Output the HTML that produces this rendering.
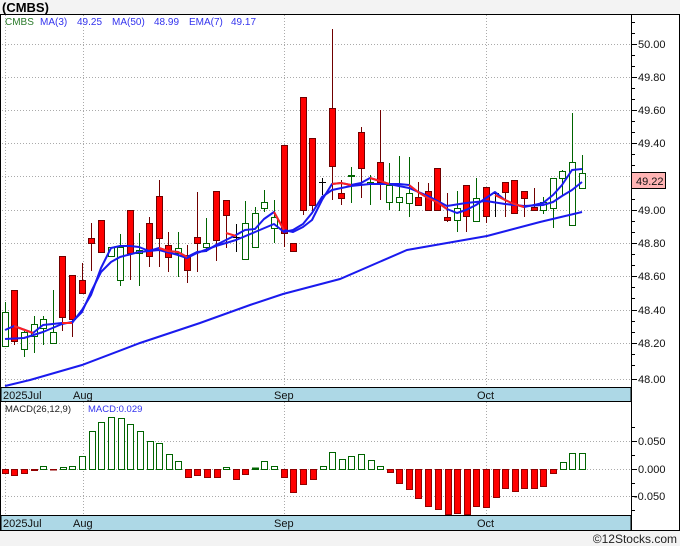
<!DOCTYPE html>
<html><head><meta charset="utf-8"><style>
html,body{margin:0;padding:0;background:#f3f3f3;}
svg{display:block;font-family:"Liberation Sans",sans-serif;}
</style></head><body>
<svg width="680" height="546" viewBox="0 0 680 546" xmlns="http://www.w3.org/2000/svg">
<rect x="0" y="0" width="680" height="546" fill="#f3f3f3"/>
<text x="2" y="12" font-size="13" font-weight="bold" fill="#000">(CMBS)</text>
<rect x="0.5" y="14.5" width="679" height="516" fill="#fff" stroke="#000"/>
<!-- grid price -->
<g stroke="#aaa" stroke-dasharray="1,2" stroke-width="1">
<line x1="2" x2="631" y1="44.5" y2="44.5"/><line x1="2" x2="631" y1="77.5" y2="77.5"/><line x1="2" x2="631" y1="110.5" y2="110.5"/><line x1="2" x2="631" y1="143.5" y2="143.5"/><line x1="2" x2="631" y1="176.5" y2="176.5"/><line x1="2" x2="631" y1="210.5" y2="210.5"/><line x1="2" x2="631" y1="243.5" y2="243.5"/><line x1="2" x2="631" y1="276.5" y2="276.5"/><line x1="2" x2="631" y1="310.5" y2="310.5"/><line x1="2" x2="631" y1="343.5" y2="343.5"/><line x1="2" x2="631" y1="379.5" y2="379.5"/>
<line x1="5.5" x2="5.5" y1="15" y2="387"/><line x1="83.5" x2="83.5" y1="15" y2="387"/><line x1="284.5" x2="284.5" y1="15" y2="387"/><line x1="486.5" x2="486.5" y1="15" y2="387"/>
<line x1="2" x2="631" y1="441.5" y2="441.5"/><line x1="2" x2="631" y1="469.5" y2="469.5"/><line x1="2" x2="631" y1="496.5" y2="496.5"/>
<line x1="5.5" x2="5.5" y1="402" y2="515"/><line x1="83.5" x2="83.5" y1="402" y2="515"/><line x1="284.5" x2="284.5" y1="402" y2="515"/><line x1="486.5" x2="486.5" y1="402" y2="515"/>
</g>
<!-- legend -->
<g font-size="10">
<text x="5" y="25" fill="#2a7a2a">CMBS</text>
<text x="40" y="25" fill="#3333ee">MA(3)</text><text x="77" y="25" fill="#3333ee">49.25</text>
<text x="112" y="25" fill="#3333ee">MA(50)</text><text x="154" y="25" fill="#3333ee">48.99</text>
<text x="189" y="25" fill="#3333ee">EMA(7)</text><text x="231" y="25" fill="#3333ee">49.17</text>
</g>
<!-- candles -->
<g stroke-width="1">
<g stroke="#006400" fill="#fff">
<line x1="5.5" x2="5.5" y1="302" y2="346"/><rect x="2.5" y="312.5" width="6" height="34"/>
<line x1="24.5" x2="24.5" y1="330" y2="357"/><rect x="21.5" y="332.5" width="6" height="17"/>
<line x1="34.5" x2="34.5" y1="316" y2="353"/><rect x="31.5" y="324.5" width="6" height="12"/>
<line x1="43.5" x2="43.5" y1="316" y2="345"/><rect x="40.5" y="319.5" width="6" height="9"/>
<line x1="53.5" x2="53.5" y1="290" y2="343"/><rect x="50.5" y="332.5" width="6" height="11"/>
<rect x="108.5" y="247.5" width="6" height="9"/>
<line x1="120.5" x2="120.5" y1="234" y2="286"/><rect x="117.5" y="247.5" width="6" height="33"/>
<line x1="139.5" x2="139.5" y1="233" y2="286"/><rect x="136.5" y="250.5" width="6" height="3"/>
<line x1="178.5" x2="178.5" y1="232" y2="277"/><rect x="175.5" y="248.5" width="6" height="5"/>
<line x1="206.5" x2="206.5" y1="218" y2="252"/><rect x="203.5" y="243.5" width="6" height="4"/>
<line x1="245.5" x2="245.5" y1="201" y2="259"/><rect x="242.5" y="223.5" width="6" height="36"/>
<line x1="255.5" x2="255.5" y1="207" y2="247"/><rect x="252.5" y="213.5" width="6" height="34"/>
<line x1="264.5" x2="264.5" y1="190" y2="212"/><rect x="261.5" y="202.5" width="6" height="6"/>
<line x1="274.5" x2="274.5" y1="200" y2="243"/><rect x="271.5" y="217.5" width="6" height="11"/>
<line x1="351.5" x2="351.5" y1="167" y2="203"/><rect x="348.5" y="175.5" width="6" height="1"/>
<line x1="370.5" x2="370.5" y1="175" y2="205"/><rect x="367.5" y="182.5" width="6" height="2"/>
<line x1="389.5" x2="389.5" y1="163" y2="210"/><rect x="386.5" y="185.5" width="6" height="17"/>
<line x1="399.5" x2="399.5" y1="156" y2="211"/><rect x="396.5" y="197.5" width="6" height="5"/>
<line x1="409.5" x2="409.5" y1="157" y2="217"/><rect x="406.5" y="193.5" width="6" height="10"/>
<line x1="457.5" x2="457.5" y1="191" y2="232"/><rect x="454.5" y="208.5" width="6" height="12"/>
<line x1="476.5" x2="476.5" y1="178" y2="221"/><rect x="473.5" y="198.5" width="6" height="23"/>
<line x1="543.5" x2="543.5" y1="197" y2="214"/><rect x="540.5" y="202.5" width="6" height="8"/>
<line x1="553.5" x2="553.5" y1="178" y2="228"/><rect x="550.5" y="178.5" width="6" height="30"/>
<line x1="562.5" x2="562.5" y1="170" y2="195"/><rect x="559.5" y="171.5" width="6" height="7"/>
<line x1="572.5" x2="572.5" y1="113" y2="225"/><rect x="569.5" y="162.5" width="6" height="63"/>
<line x1="582.5" x2="582.5" y1="155" y2="188"/><rect x="579.5" y="173.5" width="6" height="15"/>
</g>
<g stroke="#700000" fill="#ff0000">
<line x1="14.5" x2="14.5" y1="290" y2="345"/><rect x="11.5" y="290.5" width="6" height="51"/>
<line x1="62.5" x2="62.5" y1="256" y2="331"/><rect x="59.5" y="256.5" width="6" height="61"/>
<line x1="72.5" x2="72.5" y1="275" y2="337"/><rect x="69.5" y="275.5" width="6" height="44"/>
<line x1="82.5" x2="82.5" y1="263" y2="293"/><rect x="79.5" y="280.5" width="6" height="13"/>
<line x1="91.5" x2="91.5" y1="223" y2="271"/><rect x="88.5" y="238.5" width="6" height="5"/>
<rect x="98.5" y="220.5" width="6" height="32"/>
<line x1="130.5" x2="130.5" y1="210" y2="280"/><rect x="127.5" y="210.5" width="6" height="43"/>
<line x1="149.5" x2="149.5" y1="217" y2="267"/><rect x="146.5" y="223.5" width="6" height="33"/>
<line x1="159.5" x2="159.5" y1="180" y2="267"/><rect x="156.5" y="196.5" width="6" height="42"/>
<line x1="168.5" x2="168.5" y1="232" y2="272"/><rect x="165.5" y="245.5" width="6" height="12"/>
<line x1="187.5" x2="187.5" y1="245" y2="283"/><rect x="184.5" y="255.5" width="6" height="15"/>
<line x1="197.5" x2="197.5" y1="192" y2="272"/><rect x="194.5" y="237.5" width="6" height="6"/>
<line x1="216.5" x2="216.5" y1="191" y2="261"/><rect x="213.5" y="191.5" width="6" height="49"/>
<line x1="226.5" x2="226.5" y1="200" y2="248"/><rect x="223.5" y="200.5" width="6" height="15"/>
<line x1="284.5" x2="284.5" y1="145" y2="247"/><rect x="281.5" y="145.5" width="6" height="88"/>
<rect x="290.5" y="243.5" width="6" height="8"/>
<line x1="303.5" x2="303.5" y1="97" y2="215"/><rect x="300.5" y="97.5" width="6" height="113"/>
<line x1="312.5" x2="312.5" y1="138" y2="213"/><rect x="309.5" y="138.5" width="6" height="67"/>
<line x1="332.5" x2="332.5" y1="29" y2="200"/><rect x="329.5" y="108.5" width="6" height="58"/>
<line x1="341.5" x2="341.5" y1="180" y2="205"/><rect x="338.5" y="193.5" width="6" height="5"/>
<line x1="361.5" x2="361.5" y1="127" y2="198"/><rect x="358.5" y="132.5" width="6" height="36"/>
<line x1="380.5" x2="380.5" y1="110" y2="200"/><rect x="377.5" y="162.5" width="6" height="20"/>
<line x1="418.5" x2="418.5" y1="182" y2="205"/><rect x="415.5" y="197.5" width="6" height="8"/>
<line x1="428.5" x2="428.5" y1="183" y2="210"/><rect x="425.5" y="191.5" width="6" height="19"/>
<rect x="434.5" y="168.5" width="6" height="42"/>
<line x1="447.5" x2="447.5" y1="193" y2="222"/><rect x="444.5" y="217.5" width="6" height="3"/>
<line x1="466.5" x2="466.5" y1="185" y2="232"/><rect x="463.5" y="185.5" width="6" height="31"/>
<line x1="486.5" x2="486.5" y1="187" y2="223"/><rect x="483.5" y="187.5" width="6" height="29"/>
<line x1="505.5" x2="505.5" y1="182" y2="217"/><rect x="502.5" y="182.5" width="6" height="10"/>
<rect x="511.5" y="180.5" width="6" height="33"/>
<line x1="524.5" x2="524.5" y1="191" y2="217"/><rect x="521.5" y="191.5" width="6" height="7"/>
<line x1="534.5" x2="534.5" y1="188" y2="210"/><rect x="531.5" y="207.5" width="6" height="3"/>
</g>
<g stroke="#000">
<line x1="236.5" x2="236.5" y1="224" y2="252"/><line x1="233" x2="240" y1="237.5" y2="237.5"/>
<line x1="322.5" x2="322.5" y1="178" y2="195"/><line x1="319" x2="326" y1="182.5" y2="182.5"/>
<line x1="495.5" x2="495.5" y1="193" y2="217"/><line x1="492" x2="499" y1="193.5" y2="193.5"/>
</g>
</g>
<!-- MA50 -->
<polyline fill="none" stroke="#1a1aee" stroke-width="2" points="5,386 30,380 82,365 140,343 200,323 250,305 283,294 340,279 407,250 487,236 540,222 582,212"/>
<!-- MA3 / EMA7 -->
<g fill="none" stroke-width="2" stroke-linejoin="round">
<polyline stroke="#1a1aee" points="5,330 14,326 33,333 43,325 62,323 72,323 82,310 91,295 101,268 111,248 120,246 130,246 139,247 149,251 159,248 168,251 178,252 187,257 197,252 206,251 216,245 226,240 236,235 245,230 255,229 264,219 274,212 284,230 293,232 303,227 312,220 322,200 332,184 341,183 351,185 361,183 370,178 380,181 389,184 399,184 409,185 418,192 428,198 437,202 447,209 457,213 466,210 476,205 486,198 495,192 505,200 514,204 524,207 534,205 543,203 553,195 562,185 572,170 582,169"/>
<polyline stroke="#1a1aee" points="5,339 24,338 43,332 62,324 72,322 82,312 91,292 101,272 111,262 120,257 139,252 159,250 178,255 187,258 197,253 216,246 236,240 255,232 274,224 284,232 293,230 303,224 312,213 322,197 332,190 351,186 370,184 389,184 409,188 428,196 447,206 466,203 486,201 505,204 524,206 543,205 553,202 562,196 572,190 582,182"/>
<g stroke="#ff2020">
<polyline points="14,326 33,333"/><polyline points="62,323 72,323"/><polyline points="226,233 236,236"/><polyline points="274,212 284,230"/>
<polyline points="370,178 380,181 389,184"/><polyline points="409,185 418,192 428,198 437,202 447,209"/><polyline points="495,195 505,200 514,204 524,207"/>
<polyline points="159,248 168,251 178,252 187,257"/><polyline points="332,184 341,183 351,185"/>
</g>
</g>
<!-- axes -->
<line x1="631.5" x2="631.5" y1="15" y2="531" stroke="#000"/>
<g stroke="#000">
<line x1="631" x2="637" y1="44.5" y2="44.5"/><line x1="631" x2="637" y1="77.5" y2="77.5"/><line x1="631" x2="637" y1="110.5" y2="110.5"/><line x1="631" x2="637" y1="143.5" y2="143.5"/><line x1="631" x2="637" y1="176.5" y2="176.5"/><line x1="631" x2="637" y1="210.5" y2="210.5"/><line x1="631" x2="637" y1="243.5" y2="243.5"/><line x1="631" x2="637" y1="276.5" y2="276.5"/><line x1="631" x2="637" y1="310.5" y2="310.5"/><line x1="631" x2="637" y1="343.5" y2="343.5"/><line x1="631" x2="637" y1="379.5" y2="379.5"/>
<line x1="631" x2="635" y1="22.5" y2="22.5"/><line x1="631" x2="635" y1="33.5" y2="33.5"/><line x1="631" x2="635" y1="55.5" y2="55.5"/><line x1="631" x2="635" y1="66.5" y2="66.5"/><line x1="631" x2="635" y1="88.5" y2="88.5"/><line x1="631" x2="635" y1="99.5" y2="99.5"/><line x1="631" x2="635" y1="121.5" y2="121.5"/><line x1="631" x2="635" y1="132.5" y2="132.5"/><line x1="631" x2="635" y1="154.5" y2="154.5"/><line x1="631" x2="635" y1="165.5" y2="165.5"/><line x1="631" x2="635" y1="199.5" y2="199.5"/><line x1="631" x2="635" y1="221.5" y2="221.5"/><line x1="631" x2="635" y1="232.5" y2="232.5"/><line x1="631" x2="635" y1="254.5" y2="254.5"/><line x1="631" x2="635" y1="265.5" y2="265.5"/><line x1="631" x2="635" y1="287.5" y2="287.5"/><line x1="631" x2="635" y1="298.5" y2="298.5"/><line x1="631" x2="635" y1="321.5" y2="321.5"/><line x1="631" x2="635" y1="332.5" y2="332.5"/><line x1="631" x2="635" y1="354.5" y2="354.5"/><line x1="631" x2="635" y1="365.5" y2="365.5"/>
<line x1="631" x2="637" y1="441.5" y2="441.5"/><line x1="631" x2="637" y1="469.5" y2="469.5"/><line x1="631" x2="637" y1="496.5" y2="496.5"/><line x1="631" x2="635" y1="427.5" y2="427.5"/><line x1="631" x2="635" y1="455.5" y2="455.5"/><line x1="631" x2="635" y1="483.5" y2="483.5"/><line x1="631" x2="635" y1="510.5" y2="510.5"/>
</g>
<g font-size="11" fill="#111">
<text x="638" y="48">50.00</text><text x="638" y="81">49.80</text><text x="638" y="114">49.60</text><text x="638" y="147">49.40</text><text x="638" y="214">49.00</text><text x="638" y="247">48.80</text><text x="638" y="280">48.60</text><text x="638" y="314">48.40</text><text x="638" y="347">48.20</text><text x="638" y="383">48.00</text>
<text x="638" y="445">0.050</text><text x="638" y="473">0.000</text><text x="634" y="500">-0.050</text>
</g>
<rect x="631.5" y="172.5" width="34" height="16" fill="#ffb4b4" stroke="#000"/>
<text x="636" y="185" font-size="11" fill="#111">49.22</text>
<!-- date bars -->
<rect x="1" y="387.5" width="630" height="14" fill="#add8e6" stroke="#000"/>
<rect x="1" y="515.5" width="630" height="15" fill="#add8e6" stroke="#000"/>
<g font-size="11" fill="#111">
<text x="3" y="399">2025Jul</text><text x="73" y="399">Aug</text><text x="274" y="399">Sep</text><text x="477" y="399">Oct</text>
<text x="3" y="527">2025Jul</text><text x="73" y="527">Aug</text><text x="274" y="527">Sep</text><text x="477" y="527">Oct</text>
</g>
<!-- MACD -->
<text x="5" y="412" font-size="9.5" fill="#222">MACD(26,12,9)</text>
<text x="88" y="412" font-size="9.5" fill="#3333ee">MACD:0.029</text>
<g fill="#ff0000" stroke="#900000">
<rect x="2.5" y="469.5" width="6" height="4"/><rect x="11.5" y="469.5" width="6" height="6"/><rect x="21.5" y="469.5" width="6" height="4"/><rect x="31.5" y="469.5" width="6" height="1"/><rect x="50.5" y="469.5" width="6" height="0.5"/>
<rect x="185.5" y="469.5" width="6" height="8"/><rect x="194.5" y="469.5" width="6" height="6"/><rect x="204.5" y="469.5" width="6" height="8"/><rect x="214.5" y="469.5" width="6" height="8"/><rect x="233.5" y="469.5" width="6" height="10"/><rect x="242.5" y="469.5" width="6" height="5"/>
<rect x="281.5" y="469.5" width="6" height="8"/><rect x="290.5" y="469.5" width="6" height="23"/><rect x="300.5" y="469.5" width="6" height="15"/><rect x="310.5" y="469.5" width="6" height="10"/>
<rect x="387.5" y="469.5" width="6" height="3"/><rect x="396.5" y="469.5" width="6" height="14"/><rect x="406.5" y="469.5" width="6" height="20"/><rect x="415.5" y="469.5" width="6" height="29"/><rect x="425.5" y="469.5" width="6" height="37"/><rect x="435.5" y="469.5" width="6" height="40"/><rect x="445.5" y="469.5" width="6" height="45"/><rect x="454.5" y="469.5" width="6" height="44"/><rect x="464.5" y="469.5" width="6" height="45"/><rect x="473.5" y="469.5" width="6" height="37"/><rect x="483.5" y="469.5" width="6" height="38"/><rect x="493.5" y="469.5" width="6" height="28"/><rect x="502.5" y="469.5" width="6" height="19"/><rect x="512.5" y="469.5" width="6" height="22"/><rect x="521.5" y="469.5" width="6" height="19"/><rect x="531.5" y="469.5" width="6" height="19"/><rect x="540.5" y="469.5" width="6" height="17"/><rect x="550.5" y="469.5" width="6" height="4"/>
</g>
<g fill="#fff" stroke="#006400">
<rect x="40.5" y="466.5" width="6" height="3"/><rect x="60.5" y="467.5" width="6" height="2"/><rect x="69.5" y="466.5" width="6" height="3"/><rect x="79.5" y="456.5" width="6" height="13"/><rect x="89.5" y="431.5" width="6" height="38"/><rect x="98.5" y="422.5" width="6" height="47"/><rect x="108.5" y="417.5" width="6" height="52"/><rect x="118.5" y="418.5" width="6" height="51"/><rect x="127.5" y="424.5" width="6" height="45"/><rect x="137.5" y="431.5" width="6" height="38"/><rect x="147.5" y="441.5" width="6" height="28"/><rect x="156.5" y="443.5" width="6" height="26"/><rect x="166.5" y="454.5" width="6" height="15"/><rect x="175.5" y="461.5" width="6" height="8"/>
<rect x="223.5" y="467.5" width="6" height="2"/><rect x="252.5" y="468" width="6" height="1.5" fill="#006400"/><rect x="261.5" y="461.5" width="6" height="8"/><rect x="271.5" y="466.5" width="6" height="3"/>
<rect x="320.5" y="466.5" width="6" height="3"/><rect x="329.5" y="452.5" width="6" height="17"/><rect x="339.5" y="459.5" width="6" height="10"/><rect x="348.5" y="456.5" width="6" height="13"/><rect x="358.5" y="454.5" width="6" height="15"/><rect x="368.5" y="460.5" width="6" height="9"/><rect x="377.5" y="466.5" width="6" height="3"/>
<rect x="560.5" y="462.5" width="6" height="7"/><rect x="569.5" y="453.5" width="6" height="16"/><rect x="579.5" y="453.5" width="6" height="16"/>
</g>
<text x="677" y="543" font-size="12" fill="#222" text-anchor="end">©12Stocks.com</text>
</svg>
</body></html>
